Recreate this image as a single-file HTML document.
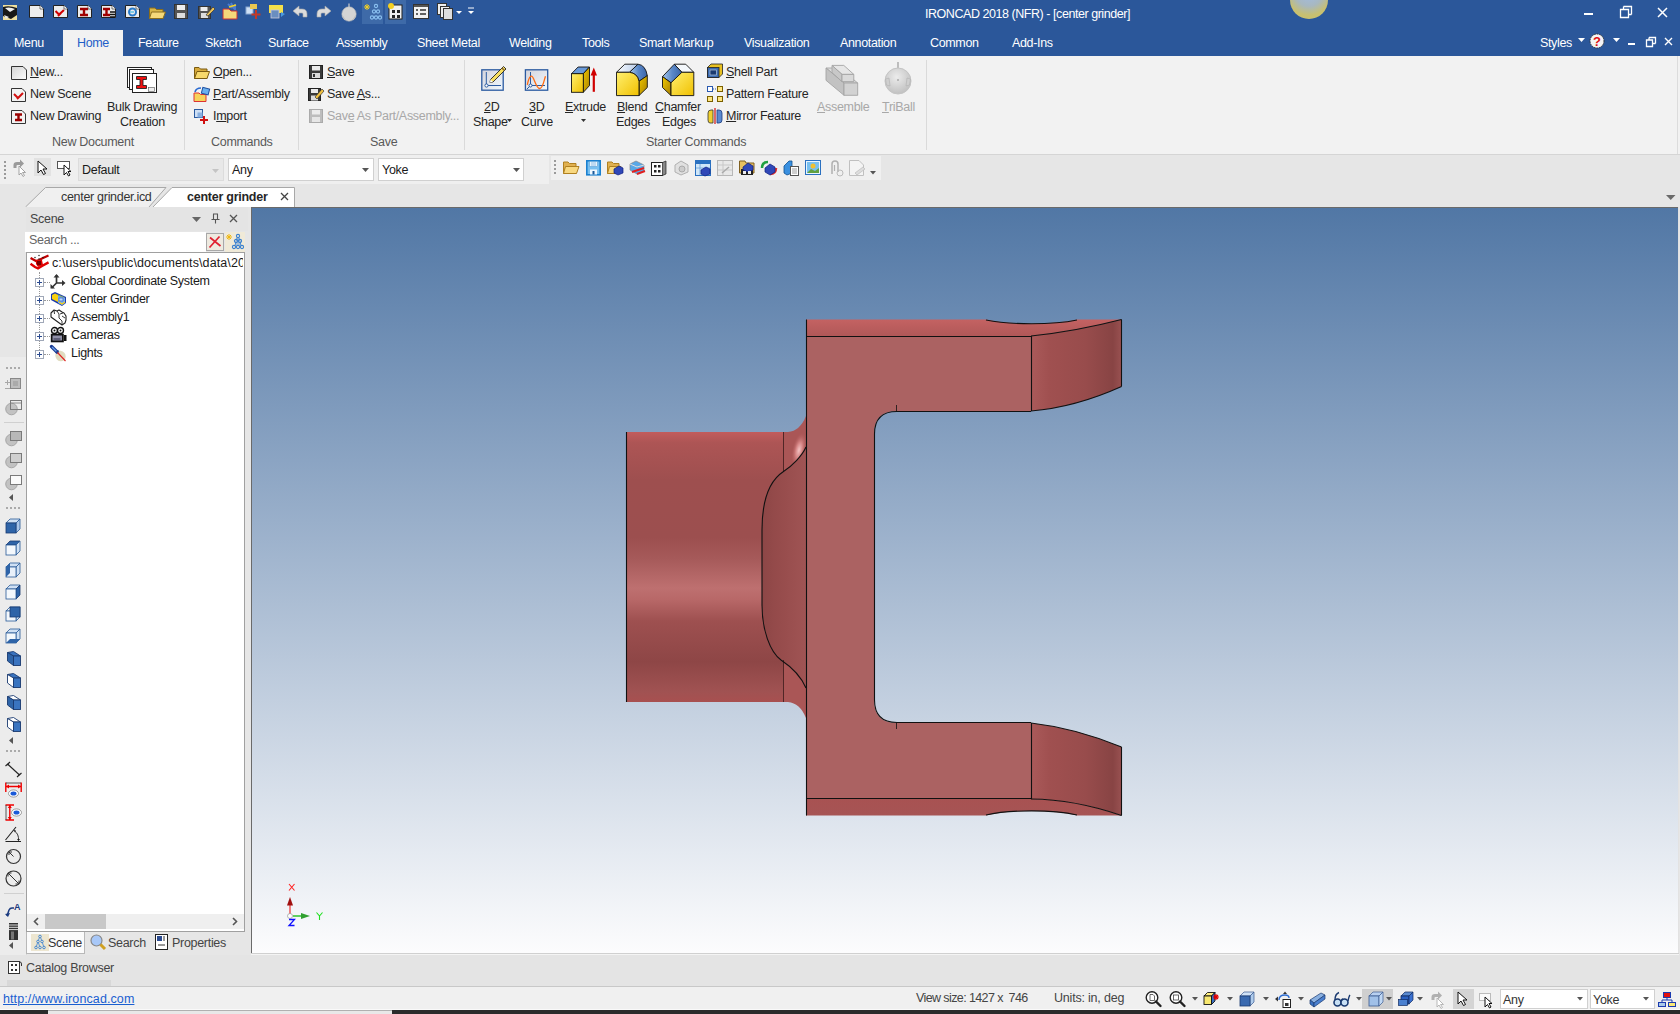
<!DOCTYPE html>
<html><head><meta charset="utf-8">
<style>
*{margin:0;padding:0;box-sizing:border-box}
html,body{width:1680px;height:1014px;overflow:hidden;background:#e6e6e6;font-family:"Liberation Sans",sans-serif;font-size:12px;color:#222}
.a{position:absolute;white-space:nowrap}
svg.a{overflow:visible}
</style></head><body>

<div class="a" style="left:0px;top:0px;width:1680px;height:56px;background:#2b579a;"></div>
<svg class="a" style="left:3px;top:5px;" width="14" height="15" viewBox="0 0 14 15"><rect x="0" y="0" width="14" height="15" fill="#efe0a0"/><path d="M0 2 Q6 0 14 3 V10 L8 14 L0 11Z" fill="#181818"/><path d="M2 3 Q7 1.5 12 4 L7 7Z" fill="#f0f0f0"/><path d="M1 10 L6 12 L3 14 Z" fill="#e8e8e8"/></svg>
<svg class="a" style="left:29px;top:5px;" width="15" height="13" viewBox="0 0 15 13"><path d="M0.5 0.5 H11 L14.5 4 V12.5 H0.5Z" fill="#ececec" stroke="#222" stroke-width="1"/><path d="M11 0.5 V4 H14.5" fill="#fff" stroke="#222" stroke-width=".6"/></svg>
<svg class="a" style="left:53px;top:5px;" width="15" height="13" viewBox="0 0 15 13"><path d="M0.5 0.5 H11 L14.5 4 V12.5 H0.5Z" fill="#ececec" stroke="#222" stroke-width="1"/><path d="M11 0.5 V4 H14.5" fill="#fff" stroke="#222" stroke-width=".6"/><path d="M2.5 6 L6 9.5 L11 5 M5 11 L8 8" stroke="#d00000" stroke-width="2" fill="none"/></svg>
<svg class="a" style="left:77px;top:5px;" width="15" height="13" viewBox="0 0 15 13"><path d="M0.5 0.5 H11 L14.5 4 V12.5 H0.5Z" fill="#ececec" stroke="#222" stroke-width="1"/><path d="M11 0.5 V4 H14.5" fill="#fff" stroke="#222" stroke-width=".6"/><path d="M3 4 H11 M7 4 V10 M3 10 H11" stroke="#a00000" stroke-width="2.4" fill="none"/></svg>
<svg class="a" style="left:101px;top:5px;" width="15" height="13" viewBox="0 0 15 13"><path d="M0.5 0.5 H11 L14.5 4 V12.5 H0.5Z" fill="#ececec" stroke="#222" stroke-width="1"/><path d="M11 0.5 V4 H14.5" fill="#fff" stroke="#222" stroke-width=".6"/><path d="M2 4 H9 M5.5 4 V10 M2 10 H9" stroke="#a00000" stroke-width="2.4" fill="none"/><path d="M9 7 H14 M9 9.5 H14 M9 12 H14" stroke="#111" stroke-width="1.4"/></svg>
<svg class="a" style="left:125px;top:5px;" width="15" height="13" viewBox="0 0 15 13"><path d="M0.5 0.5 H11 L14.5 4 V12.5 H0.5Z" fill="#ececec" stroke="#222" stroke-width="1"/><path d="M11 0.5 V4 H14.5" fill="#fff" stroke="#222" stroke-width=".6"/><circle cx="7.5" cy="7" r="3.5" fill="none" stroke="#2a7ac8" stroke-width="2"/><path d="M5 7 L9 7" stroke="#20b0e0"/></svg>
<svg class="a" style="left:149px;top:6px;" width="17" height="13" viewBox="0 0 17 13"><path d="M0.5 2 H6 L7.5 3.5 H14 V12.5 H0.5Z" fill="#d9b84a" stroke="#8a6d1c"/><path d="M2.5 6 H16.5 L14 12.5 H0.5Z" fill="#f5d97a" stroke="#8a6d1c"/></svg>
<svg class="a" style="left:174px;top:4px;" width="14" height="15" viewBox="0 0 14 15"><rect x="0.5" y="0.5" width="13" height="14" fill="#555" stroke="#333"/><rect x="3" y="1" width="8" height="5" fill="#eee"/><rect x="3" y="9" width="8" height="5" fill="#ddd"/></svg>
<svg class="a" style="left:198px;top:4px;" width="17" height="15" viewBox="0 0 17 15"><rect x="0.5" y="2.5" width="12" height="12" fill="#555" stroke="#333"/><rect x="3" y="9" width="7" height="5" fill="#ddd"/><rect x="2.5" y="3" width="7" height="4" fill="#eee"/><path d="M8 11 L15 3 L17 5 L10 12Z" fill="#e9c25a" stroke="#333" stroke-width=".7"/></svg>
<svg class="a" style="left:222px;top:3px;" width="17" height="17" viewBox="0 0 17 17"><path d="M1 6 H7 L9 8 H15 V16 H1Z" fill="#f5d97a" stroke="#c33"/><path d="M6 1 L10 5 M9 0 L12 6 M13 1 L13 7" stroke="#4a7ad0" stroke-width="2"/><path d="M7 4 L14 2" stroke="#f0d020" stroke-width="1.5"/></svg>
<svg class="a" style="left:246px;top:4px;" width="16" height="16" viewBox="0 0 16 16"><rect x="0" y="3" width="7" height="7" fill="#cfe0f5" stroke="#8aa8d0"/><rect x="4" y="0" width="7" height="5" fill="#e8c850"/><path d="M10 6 V15 M5.5 10.5 H14.5" stroke="#c0392b" stroke-width="2"/></svg>
<svg class="a" style="left:268px;top:4px;" width="18" height="16" viewBox="0 0 18 16"><rect x="1" y="1" width="14" height="8" fill="#f4e04a"/><rect x="3" y="6" width="8" height="8" fill="#6a8ec0" stroke="#ccd" stroke-width=".8"/><path d="M13 8 L17 10 L13 13" fill="#4a9ae0"/></svg>
<svg class="a" style="left:292px;top:5px;" width="16" height="13" viewBox="0 0 16 13"><path d="M1 6 L7 1 V4 H10 Q15 4 15 9 V12 H11 V9 Q11 8 10 8 H7 V11Z" fill="#dcdcdc" stroke="#aaa" stroke-width=".6"/></svg>
<svg class="a" style="left:316px;top:5px;" width="16" height="13" viewBox="0 0 16 13"><path d="M15 6 L9 1 V4 H6 Q1 4 1 9 V12 H5 V9 Q5 8 6 8 H9 V11Z" fill="#dcdcdc" stroke="#aaa" stroke-width=".6"/></svg>
<svg class="a" style="left:340px;top:3px;" width="18" height="18" viewBox="0 0 18 18"><path d="M9 0.5 V4" stroke="#ccc" stroke-width="1.2"/><circle cx="9" cy="11" r="7.2" fill="#d4d4d4" stroke="#b8b8b8" stroke-width=".6"/><path d="M2.5 13 L5 17 M15.5 13 L13 17" stroke="#bdbdbd" stroke-width="1.2"/></svg>
<div class="a" style="left:362px;top:0px;width:21px;height:24px;background:#3e6aa8;"></div>
<svg class="a" style="left:363px;top:3px;" width="19" height="18" viewBox="0 0 19 18"><path d="M4 1 V7 M1 4 H7 M2 2 L6 6 M6 2 L2 6" stroke="#f5d020" stroke-width="1"/><circle cx="13" cy="3" r="1.6" fill="none" stroke="#8ac0f0" stroke-width="1.1"/><circle cx="11" cy="8.5" r="1.6" fill="none" stroke="#8ac0f0" stroke-width="1.1"/><circle cx="15" cy="8.5" r="1.6" fill="none" stroke="#8ac0f0" stroke-width="1.1"/><circle cx="9" cy="14.5" r="1.6" fill="none" stroke="#8ac0f0" stroke-width="1.1"/><circle cx="13" cy="14.5" r="1.6" fill="none" stroke="#8ac0f0" stroke-width="1.1"/><circle cx="17" cy="14.5" r="1.6" fill="none" stroke="#8ac0f0" stroke-width="1.1"/></svg>
<div class="a" style="left:385px;top:0px;width:21px;height:24px;background:#3e6aa8;"></div>
<svg class="a" style="left:387px;top:3px;" width="17" height="17" viewBox="0 0 17 17"><rect x="2" y="2" width="13" height="14" fill="#f0f0f0" stroke="#222"/><rect x="5" y="7" width="3" height="3" fill="#222"/><rect x="10" y="7" width="3" height="3" fill="#222"/><rect x="5" y="12" width="3" height="3" fill="#222"/><rect x="10" y="12" width="3" height="3" fill="#222"/><circle cx="4" cy="3" r="3" fill="#f5d020"/></svg>
<svg class="a" style="left:413px;top:4px;" width="16" height="15" viewBox="0 0 16 15"><rect x="0.5" y="0.5" width="15" height="14" fill="#f2f2f2" stroke="#333"/><rect x="1" y="1" width="14" height="2" fill="#555"/><path d="M3 6 H5 M7 6 H13 M3 10 H5 M7 10 H13" stroke="#333" stroke-width="1.3"/></svg>
<svg class="a" style="left:437px;top:3px;" width="25" height="17" viewBox="0 0 25 17"><rect x="0.5" y="0.5" width="9" height="11" fill="#eee" stroke="#333"/><rect x="3.5" y="3.5" width="9" height="11" fill="#eee" stroke="#333"/><rect x="6.5" y="5.5" width="9" height="11" fill="#ddd" stroke="#333"/><path d="M19 8 H25 L22 11Z" fill="#fff"/></svg>
<svg class="a" style="left:467px;top:7px;" width="8" height="9" viewBox="0 0 8 9"><path d="M1 1 H7" stroke="#fff"/><path d="M1 4 H7 L4 7Z" fill="#fff"/></svg>
<div class="a" style="left:925px;top:8.38px;font-size:12.5px;line-height:12.5px;color:#fff;letter-spacing:-0.45px">IRONCAD 2018 (NFR) - [center grinder]</div>
<svg class="a" style="left:1289px;top:-14px;" width="40" height="34" viewBox="0 0 40 34"><defs><radialGradient id="mg" cx=".5" cy=".3" r=".6"><stop offset="0" stop-color="#a0bce6"/><stop offset=".6" stop-color="#a8b8c0"/><stop offset="1" stop-color="#c8c070"/></radialGradient></defs><circle cx="20" cy="14" r="19" fill="url(#mg)"/></svg>
<div class="a" style="left:1584px;top:13px;width:9px;height:2px;background:#fff;"></div>
<svg class="a" style="left:1620px;top:6px;" width="12" height="12" viewBox="0 0 12 12"><path d="M3.5 0.5 H11.5 V8.5 M0.5 3.5 H8.5 V11.5 H0.5Z M3.5 0.5 V3.5 M8.5 8.5 H11.5" stroke="#fff" stroke-width="1.3" fill="none"/></svg>
<svg class="a" style="left:1657px;top:7px;" width="11" height="11" viewBox="0 0 11 11"><path d="M1 1 L10 10 M10 1 L1 10" stroke="#fff" stroke-width="1.5"/></svg>
<div class="a" style="left:63px;top:30px;width:60px;height:26px;background:#f2f2f2;"></div>
<div class="a" style="left:14px;top:37.38px;font-size:12.5px;line-height:12.5px;color:#fff;letter-spacing:-0.35px;">Menu</div>
<div class="a" style="left:77px;top:37.38px;font-size:12.5px;line-height:12.5px;color:#1f5fc8;letter-spacing:-0.35px;">Home</div>
<div class="a" style="left:138px;top:37.38px;font-size:12.5px;line-height:12.5px;color:#fff;letter-spacing:-0.35px;">Feature</div>
<div class="a" style="left:205px;top:37.38px;font-size:12.5px;line-height:12.5px;color:#fff;letter-spacing:-0.35px;">Sketch</div>
<div class="a" style="left:268px;top:37.38px;font-size:12.5px;line-height:12.5px;color:#fff;letter-spacing:-0.35px;">Surface</div>
<div class="a" style="left:336px;top:37.38px;font-size:12.5px;line-height:12.5px;color:#fff;letter-spacing:-0.35px;">Assembly</div>
<div class="a" style="left:417px;top:37.38px;font-size:12.5px;line-height:12.5px;color:#fff;letter-spacing:-0.35px;">Sheet Metal</div>
<div class="a" style="left:509px;top:37.38px;font-size:12.5px;line-height:12.5px;color:#fff;letter-spacing:-0.35px;">Welding</div>
<div class="a" style="left:582px;top:37.38px;font-size:12.5px;line-height:12.5px;color:#fff;letter-spacing:-0.35px;">Tools</div>
<div class="a" style="left:639px;top:37.38px;font-size:12.5px;line-height:12.5px;color:#fff;letter-spacing:-0.35px;">Smart Markup</div>
<div class="a" style="left:744px;top:37.38px;font-size:12.5px;line-height:12.5px;color:#fff;letter-spacing:-0.35px;">Visualization</div>
<div class="a" style="left:840px;top:37.38px;font-size:12.5px;line-height:12.5px;color:#fff;letter-spacing:-0.35px;">Annotation</div>
<div class="a" style="left:930px;top:37.38px;font-size:12.5px;line-height:12.5px;color:#fff;letter-spacing:-0.35px;">Common</div>
<div class="a" style="left:1012px;top:37.38px;font-size:12.5px;line-height:12.5px;color:#fff;letter-spacing:-0.35px;">Add-Ins</div>
<div class="a" style="left:1540px;top:37.38px;font-size:12.5px;line-height:12.5px;color:#fff;letter-spacing:-0.35px;">Styles</div>
<svg class="a" style="left:1578px;top:38px;" width="7" height="5" viewBox="0 0 7 5"><path d="M0 0 H7 L3.5 4Z" fill="#fff"/></svg>
<svg class="a" style="left:1589px;top:33px;" width="16" height="16" viewBox="0 0 16 16"><circle cx="8" cy="8" r="7" fill="#f4f4f4" stroke="#333" stroke-dasharray="1.5 1"/><text x="8" y="13" font-family="Liberation Sans" font-weight="bold" font-size="13" fill="#e01010" text-anchor="middle">?</text></svg>
<svg class="a" style="left:1613px;top:38px;" width="7" height="5" viewBox="0 0 7 5"><path d="M0 0 H7 L3.5 4Z" fill="#fff"/></svg>
<div class="a" style="left:1628px;top:43px;width:7px;height:2px;background:#fff;"></div>
<svg class="a" style="left:1646px;top:37px;" width="10" height="10" viewBox="0 0 10 10"><path d="M3 .5 H9.5 V6.5 M.5 3 H6.5 V9.5 H.5Z M3 .5 V3 M6.5 6.5 H9.5" stroke="#fff" stroke-width="1.3" fill="none"/></svg>
<svg class="a" style="left:1664px;top:37px;" width="9" height="9" viewBox="0 0 9 9"><path d="M1 1 L8 8 M8 1 L1 8" stroke="#fff" stroke-width="1.4"/></svg>
<div class="a" style="left:0px;top:56px;width:1680px;height:98px;background:#f2f2f2;"></div>
<div class="a" style="left:1677px;top:56px;width:1px;height:98px;background:#dcdcdc;"></div>
<div class="a" style="left:0px;top:154px;width:1680px;height:1px;background:#d5d5d5;"></div>
<div class="a" style="left:184px;top:60px;width:1px;height:90px;background:#dadada;"></div>
<div class="a" style="left:298px;top:60px;width:1px;height:90px;background:#dadada;"></div>
<div class="a" style="left:464px;top:60px;width:1px;height:90px;background:#dadada;"></div>
<div class="a" style="left:926px;top:60px;width:1px;height:90px;background:#dadada;"></div>
<svg class="a" style="left:11px;top:66px;" width="16" height="14" viewBox="0 0 16 14"><defs><linearGradient id="dg" x1="0" y1="0" x2="1" y2="1"><stop offset="0" stop-color="#d4d4d4"/><stop offset="1" stop-color="#fcfcfc"/></linearGradient></defs><path d="M0.5 0.5 H12 L15.5 4 V13.5 H0.5Z" fill="url(#dg)" stroke="#333"/></svg>
<svg class="a" style="left:11px;top:88px;" width="16" height="14" viewBox="0 0 16 14"><path d="M0.5 0.5 H11 L14.5 4 V13.5 H0.5Z" fill="#f2f2f2" stroke="#333"/><path d="M3 6 L7 10 L12 5 M6 11 L9 8" stroke="#d01010" stroke-width="2" fill="none"/></svg>
<svg class="a" style="left:11px;top:110px;" width="16" height="14" viewBox="0 0 16 14"><path d="M0.5 0.5 H11 L14.5 4 V13.5 H0.5Z" fill="#f2f2f2" stroke="#333"/><path d="M4 4.5 H11 M7.5 4.5 V10 M4 10 H11" stroke="#9b0000" stroke-width="2.4" fill="none"/></svg>
<div class="a" style="left:30px;top:66.38px;font-size:12.5px;line-height:12.5px;color:#262626;letter-spacing:-0.3px"><u>N</u>ew...</div>
<div class="a" style="left:30px;top:88.38px;font-size:12.5px;line-height:12.5px;color:#262626;letter-spacing:-0.3px">New Scene</div>
<div class="a" style="left:30px;top:110.38px;font-size:12.5px;line-height:12.5px;color:#262626;letter-spacing:-0.3px">New Drawing</div>
<svg class="a" style="left:127px;top:67px;" width="31" height="26" viewBox="0 0 31 26"><rect x="0.5" y="0.5" width="24" height="20" fill="#fff" stroke="#222"/><rect x="2.5" y="2.5" width="24" height="20" fill="#fff" stroke="#222"/><rect x="5.5" y="6.5" width="24" height="19" fill="#fff" stroke="#222"/><path d="M9.5 9.5 H19.5 V12.5 H16 V18.5 H19.5 V21.5 H9.5 V18.5 H13 V12.5 H9.5Z" fill="#f01010" stroke="#222" stroke-width=".9"/><rect x="21.5" y="20.5" width="6" height="4" fill="#eee" stroke="#555" stroke-width=".6"/></svg>
<div class="a" style="left:107px;top:101.38px;font-size:12.5px;line-height:12.5px;color:#262626;letter-spacing:-0.3px">Bulk Drawing</div>
<div class="a" style="left:120px;top:116.38px;font-size:12.5px;line-height:12.5px;color:#262626;letter-spacing:-0.3px">Creation</div>
<div class="a" style="left:52px;top:136.38px;font-size:12.5px;line-height:12.5px;color:#595959;letter-spacing:-0.3px">New Document</div>
<svg class="a" style="left:194px;top:66px;" width="16" height="13" viewBox="0 0 16 13"><path d="M0.5 1.5 H5 L6.5 3 H13 V12.5 H0.5Z" fill="#d6a93a" stroke="#7a5a10"/><path d="M3 5.5 H15.5 L13 12.5 H0.5Z" fill="#f7d86a" stroke="#7a5a10"/></svg>
<svg class="a" style="left:193px;top:87px;" width="17" height="15" viewBox="0 0 17 15"><path d="M1 6 H6 L7.5 7.5 H13 V14.5 H1Z" fill="#f6d35a" stroke="#d33" stroke-width="1"/><path d="M2 5 Q3 1 8 1" stroke="#2a6ad0" stroke-width="1.6" fill="none"/><rect x="9" y="1" width="7" height="6" fill="#6ab0f0" stroke="#2050a0" transform="rotate(15 12 4)"/></svg>
<svg class="a" style="left:194px;top:109px;" width="16" height="15" viewBox="0 0 16 15"><rect x="0.5" y="0.5" width="8" height="8" fill="#cfe0f5" stroke="#2a5aa0"/><rect x="3.5" y="3.5" width="5" height="5" fill="#8ab0e0"/><path d="M10 7 V15 M6 11 H14" stroke="#d01010" stroke-width="2"/></svg>
<div class="a" style="left:213px;top:66.38px;font-size:12.5px;line-height:12.5px;color:#262626;letter-spacing:-0.3px"><u>O</u>pen...</div>
<div class="a" style="left:213px;top:88.38px;font-size:12.5px;line-height:12.5px;color:#262626;letter-spacing:-0.3px"><u>P</u>art/Assembly</div>
<div class="a" style="left:213px;top:110.38px;font-size:12.5px;line-height:12.5px;color:#262626;letter-spacing:-0.3px">I<u>m</u>port</div>
<div class="a" style="left:211px;top:136.38px;font-size:12.5px;line-height:12.5px;color:#595959;letter-spacing:-0.3px">Commands</div>
<svg class="a" style="left:309px;top:65px;" width="14" height="14" viewBox="0 0 14 14"><rect x="0.5" y="0.5" width="13" height="13" fill="#3a3a3a" stroke="#222"/><rect x="3" y="1" width="8" height="4.5" fill="#eaeaea"/><rect x="3" y="8" width="8" height="5" fill="#dcdcdc"/><rect x="4" y="9" width="2" height="3" fill="#333"/></svg>
<svg class="a" style="left:308px;top:87px;" width="16" height="15" viewBox="0 0 16 15"><rect x="0.5" y="1.5" width="12" height="12" fill="#3a3a3a" stroke="#222"/><rect x="3" y="2" width="7" height="4" fill="#eaeaea"/><rect x="3" y="8.5" width="7" height="5" fill="#dcdcdc"/><path d="M7 10 L14 2 L16 4 L9 12Z" fill="#f0c040" stroke="#333" stroke-width=".7"/></svg>
<svg class="a" style="left:309px;top:109px;" width="14" height="14" viewBox="0 0 14 14"><rect x="0.5" y="0.5" width="13" height="13" fill="#bdbdbd" stroke="#aaa"/><rect x="3" y="1" width="8" height="4.5" fill="#ececec"/><rect x="3" y="8" width="8" height="5" fill="#e6e6e6"/></svg>
<div class="a" style="left:327px;top:66.38px;font-size:12.5px;line-height:12.5px;color:#262626;letter-spacing:-0.3px"><u>S</u>ave</div>
<div class="a" style="left:327px;top:88.38px;font-size:12.5px;line-height:12.5px;color:#262626;letter-spacing:-0.3px">Save <u>A</u>s...</div>
<div class="a" style="left:327px;top:110.38px;font-size:12.5px;line-height:12.5px;color:#a8a8a8;letter-spacing:-0.3px">Sav<u>e</u> As Part/Assembly...</div>
<div class="a" style="left:370px;top:136.38px;font-size:12.5px;line-height:12.5px;color:#595959;letter-spacing:-0.3px">Save</div>
<svg class="a" style="left:480px;top:64px;" width="27" height="28" viewBox="0 0 27 28"><defs><linearGradient id="bx" x1="0" y1="0" x2="1" y2="1"><stop offset="0" stop-color="#d4d4dc"/><stop offset="1" stop-color="#f0f8fe"/></linearGradient></defs><rect x="1.8" y="5.8" width="21.4" height="20.4" fill="url(#bx)" stroke="#2a5aa0" stroke-width="1.3"/><path d="M6.3 8 V21.5 H21" stroke="#2a5aa0" stroke-width="1" fill="none"/><circle cx="6.5" cy="21.5" r="1.6" fill="#fff" stroke="#2a5aa0" stroke-width="1"/><path d="M10.5 15.5 L23.5 2.5 L26 5 L13 18 L10 18.5Z" fill="#f8e060" stroke="#222" stroke-width=".9"/><path d="M10.5 15.5 L13 18 L10 18.5Z" fill="#fff"/><path d="M22 4 L24.5 6.5" stroke="#8a6a30" stroke-width="1.5"/></svg>
<div class="a" style="left:484px;top:101.38px;font-size:12.5px;line-height:12.5px;color:#262626;letter-spacing:-0.3px"><u>2</u>D</div>
<div class="a" style="left:473px;top:116.38px;font-size:12.5px;line-height:12.5px;color:#262626;letter-spacing:-0.3px">Shape</div>
<svg class="a" style="left:507px;top:119px;" width="5" height="3" viewBox="0 0 5 3"><path d="M0 0 H5 L2.5 3Z" fill="#333"/></svg>
<svg class="a" style="left:524px;top:68px;" width="25" height="24" viewBox="0 0 25 24"><rect x="1.4" y="1.8" width="22.3" height="20.4" fill="url(#bx)" stroke="#2a5aa0" stroke-width="1.3"/><path d="M6.5 4 V17.5 H21 M6.5 17.5 L3 21" stroke="#2a5aa0" stroke-width="1" fill="none"/><circle cx="6.5" cy="17.5" r="1.5" fill="#fff" stroke="#2a5aa0" stroke-width="1"/><path d="M3.3 16.8 C4.5 11 6 8 7.6 8.2 C10 8.5 12 20.5 15.6 20.5 C19 20.5 20 12 21.5 8.2" stroke="#ff6a10" stroke-width="1.3" fill="none"/></svg>
<div class="a" style="left:529px;top:101.38px;font-size:12.5px;line-height:12.5px;color:#262626;letter-spacing:-0.3px"><u>3</u>D</div>
<div class="a" style="left:521px;top:116.38px;font-size:12.5px;line-height:12.5px;color:#262626;letter-spacing:-0.3px">Curve</div>
<svg class="a" style="left:571px;top:66px;" width="28" height="28" viewBox="0 0 28 28"><defs><linearGradient id="yg" x1="0" y1="0" x2="1" y2="1"><stop offset="0" stop-color="#fff070"/><stop offset="1" stop-color="#f0c000"/></linearGradient><linearGradient id="yd" x1="0" y1="0" x2="1" y2="1"><stop offset="0" stop-color="#f0c800"/><stop offset="1" stop-color="#a88000"/></linearGradient><linearGradient id="bgr" x1="0" y1="0" x2="1" y2="0"><stop offset="0" stop-color="#a8c8ec"/><stop offset=".5" stop-color="#5a88c8"/><stop offset="1" stop-color="#3a64a8"/></linearGradient><linearGradient id="wg" x1="0" y1="0" x2="1" y2="0"><stop offset="0" stop-color="#fafcff"/><stop offset="1" stop-color="#b8cce8"/></linearGradient></defs><path d="M0.5 7.7 L7.1 1 H18.5 L12.3 7.7Z" fill="#6a9ad8" stroke="#111" stroke-width=".9"/><path d="M12.3 7.7 L18.5 1 V19.6 L12.3 26.3Z" fill="url(#yd)" stroke="#111" stroke-width=".9"/><rect x="0.5" y="7.7" width="11.8" height="18.6" fill="url(#yg)" stroke="#111" stroke-width=".9"/><path d="M22.8 25.8 V8" stroke="#d00000" stroke-width="2.2"/><path d="M19.6 9.5 L22.8 1.5 L26 9.5Z" fill="#d00000"/></svg>
<div class="a" style="left:565px;top:101.38px;font-size:12.5px;line-height:12.5px;color:#262626;letter-spacing:-0.3px"><u>E</u>xtrude</div>
<svg class="a" style="left:581px;top:119px;" width="5" height="4" viewBox="0 0 5 4"><path d="M0 0 H5 L2.5 3Z" fill="#333"/></svg>
<svg class="a" style="left:616px;top:63px;" width="33" height="34" viewBox="0 0 33 34"><path d="M0.5 9.3 L8.8 1.2 H22 L13.5 9.3Z" fill="url(#wg)" stroke="#111" stroke-width=".9"/><path d="M13.5 9.3 L22 1.2 Q29.5 2 31.3 12.6 L23 18.3 Q21.5 10.3 13.5 9.3Z" fill="url(#bgr)" stroke="#111" stroke-width=".9"/><path d="M23 18.3 L31.3 12.6 V24.5 L23 32.6Z" fill="url(#yd)" stroke="#111" stroke-width=".9"/><path d="M0.5 9.3 H13.5 Q21.5 10.3 23 18.3 V32.6 H0.5Z" fill="url(#yg)" stroke="#111" stroke-width=".9"/></svg>
<div class="a" style="left:617px;top:101.38px;font-size:12.5px;line-height:12.5px;color:#262626;letter-spacing:-0.3px"><u>B</u>lend</div>
<div class="a" style="left:616px;top:116.38px;font-size:12.5px;line-height:12.5px;color:#262626;letter-spacing:-0.3px">Edges</div>
<svg class="a" style="left:662px;top:63px;" width="33" height="34" viewBox="0 0 33 34"><path d="M12.3 1.2 H23.7 L31.8 9.3 H19.9Z" fill="#f4f8fc" stroke="#111" stroke-width=".9"/><path d="M0.5 13.6 L12.3 1.2 L19.9 9.3 L9 19.8Z" fill="url(#bgr)" stroke="#111" stroke-width=".9"/><path d="M0.5 13.6 L9 19.8 V32.6 L0.5 24.5Z" fill="url(#yd)" stroke="#111" stroke-width=".9"/><path d="M9 19.8 L19.9 9.3 H31.8 V32.6 H9Z" fill="url(#yg)" stroke="#111" stroke-width=".9"/></svg>
<div class="a" style="left:655px;top:101.38px;font-size:12.5px;line-height:12.5px;color:#262626;letter-spacing:-0.3px"><u>C</u>hamfer</div>
<div class="a" style="left:662px;top:116.38px;font-size:12.5px;line-height:12.5px;color:#262626;letter-spacing:-0.3px">Edges</div>
<svg class="a" style="left:707px;top:63px;" width="16" height="15" viewBox="0 0 16 15"><path d="M0.5 4.5 L4 1 H15.5 V11 L12 14.5 H0.5Z" fill="#e8c020" stroke="#222" stroke-width=".8"/><rect x="0.5" y="4.5" width="11.5" height="10" fill="#3a6ab0" stroke="#222" stroke-width=".8"/><rect x="3" y="7" width="6.5" height="5" fill="#1a3a70" stroke="#cde" stroke-width=".6"/></svg>
<svg class="a" style="left:707px;top:86px;" width="16" height="16" viewBox="0 0 16 16"><rect x="0.5" y="0.5" width="5" height="5" fill="#fff" stroke="#2a5ab0"/><rect x="10.5" y="0.5" width="5" height="5" fill="#ffe680" stroke="#7a6000"/><rect x="0.5" y="10.5" width="5" height="5" fill="#ffe680" stroke="#7a6000"/><rect x="10.5" y="10.5" width="5" height="5" fill="#ffe680" stroke="#7a6000"/><path d="M6 3 H10" stroke="#2a5ab0" stroke-dasharray="1 1"/></svg>
<svg class="a" style="left:707px;top:108px;" width="16" height="16" viewBox="0 0 16 16"><path d="M1 5 Q1 2 4 2 H6 V15 H3 Q1 15 1 12Z" fill="#f0d030" stroke="#333" stroke-width=".8"/><path d="M10 2 H12 Q15 2 15 5 V12 Q15 15 12 15 H10Z" fill="#5a8ad0" stroke="#1a3a80" stroke-width=".8"/><path d="M8 0 V16" stroke="#d01010" stroke-width="1.2"/></svg>
<div class="a" style="left:726px;top:66.38px;font-size:12.5px;line-height:12.5px;color:#262626;letter-spacing:-0.3px"><u>S</u>hell Part</div>
<div class="a" style="left:726px;top:88.38px;font-size:12.5px;line-height:12.5px;color:#262626;letter-spacing:-0.3px">Pattern Feature</div>
<div class="a" style="left:726px;top:110.38px;font-size:12.5px;line-height:12.5px;color:#262626;letter-spacing:-0.3px"><u>M</u>irror Feature</div>
<svg class="a" style="left:825px;top:63px;" width="34" height="34" viewBox="0 0 34 34"><g stroke="#a4a4a4" stroke-width=".9" stroke-linejoin="round"><path d="M19 20 H32.7 L14.7 5 H1Z" fill="#dcdcdc"/><path d="M1 5 L19 20 V32.3 L1 17.3Z" fill="#c2c2c2"/><rect x="19" y="20" width="13.7" height="12.3" fill="#d2d2d2"/><path d="M17 11.4 H28.8 L18.8 2.4 H7Z" fill="#e6e6e6"/><path d="M7 2.4 L17 11.4 V18.6 L7 9.6Z" fill="#c8c8c8"/><rect x="17" y="11.4" width="11.8" height="7.2" fill="#dadada"/></g></svg>
<svg class="a" style="left:884px;top:62px;" width="28" height="33" viewBox="0 0 28 33"><defs><radialGradient id="tb" cx=".45" cy=".35" r=".7"><stop offset="0" stop-color="#ececec"/><stop offset="1" stop-color="#bdbdbd"/></radialGradient></defs><path d="M14 0 V6" stroke="#9a9a9a" stroke-width="1.2"/><circle cx="14" cy="19" r="13" fill="url(#tb)" stroke="#c4c4c4"/><path d="M1.5 17 L5 16 L6 24 L2.5 23Z M26.5 17 L23 16 L22 24 L25.5 23Z" fill="#cfcfcf" stroke="#b0b0b0" stroke-width=".6"/><circle cx="14" cy="18" r="1" fill="#aaa"/></svg>
<div class="a" style="left:817px;top:101.38px;font-size:12.5px;line-height:12.5px;color:#a8a8a8;letter-spacing:-0.3px"><u>A</u>ssemble</div>
<div class="a" style="left:882px;top:101.38px;font-size:12.5px;line-height:12.5px;color:#a8a8a8;letter-spacing:-0.3px"><u>T</u>riBall</div>
<div class="a" style="left:646px;top:136.38px;font-size:12.5px;line-height:12.5px;color:#595959;letter-spacing:-0.3px">Starter Commands</div>
<div class="a" style="left:0px;top:155px;width:1680px;height:52px;background:#e6e6e6;"></div>
<div class="a" style="left:0px;top:155px;width:549px;height:29px;background:#efefef;"></div>
<div class="a" style="left:4px;top:161px;width:2px;height:2px;background:#9a9a9a;"></div>
<div class="a" style="left:4px;top:165px;width:2px;height:2px;background:#9a9a9a;"></div>
<div class="a" style="left:4px;top:169px;width:2px;height:2px;background:#9a9a9a;"></div>
<div class="a" style="left:4px;top:173px;width:2px;height:2px;background:#9a9a9a;"></div>
<div class="a" style="left:4px;top:177px;width:2px;height:2px;background:#9a9a9a;"></div>
<svg class="a" style="left:13px;top:159px;" width="17" height="18" viewBox="0 0 17 18"><path d="M0.5 9 V6 Q0.5 3 4 3 H7 V0.5 L11 4.5 L7 8.5 V6 H4.5 Q3.5 6 3.5 7 V9Z" fill="#9a9a9a"/><path d="M6 7 V16 L8 14 L10 17.5 L11.5 16.5 L9.5 13.5 H12.5Z" fill="#fff" stroke="#9a9a9a" stroke-width=".9"/></svg>
<div class="a" style="left:34px;top:158px;width:17px;height:18px;background:#e2e2e2;"></div>
<svg class="a" style="left:37px;top:160px;" width="11" height="15" viewBox="0 0 11 15"><path d="M1 1 V13 L4 10 L6.5 14.5 L8.5 13.5 L6 9 H10Z" fill="#fff" stroke="#111" stroke-width="1"/></svg>
<svg class="a" style="left:57px;top:161px;" width="17" height="15" viewBox="0 0 17 15"><rect x="0.5" y="0.5" width="12" height="7" fill="#fff" stroke="#555"/><path d="M7 4 V14 L9.5 11.5 L11.5 15 L13 14 L11 10.5 H14Z" fill="#fff" stroke="#111" stroke-width="1"/></svg>
<div class="a" style="left:78px;top:158px;width:146px;height:23px;background:#e8e8e8;border:1px solid #dcdcdc"></div>
<div class="a" style="left:82px;top:164.38px;font-size:12.5px;line-height:12.5px;color:#1a1a1a;letter-spacing:-0.3px">Default</div>
<svg class="a" style="left:212px;top:169px;" width="7" height="4" viewBox="0 0 7 4"><path d="M0 0 H7 L3.5 4Z" fill="#c4c4c4"/></svg>
<div class="a" style="left:228px;top:158px;width:146px;height:23px;background:#fff;border:1px solid #d0d0d0"></div>
<div class="a" style="left:232px;top:164.38px;font-size:12.5px;line-height:12.5px;color:#1a1a1a;letter-spacing:-0.3px">Any</div>
<svg class="a" style="left:362px;top:168px;" width="7" height="4" viewBox="0 0 7 4"><path d="M0 0 H7 L3.5 4Z" fill="#555"/></svg>
<div class="a" style="left:378px;top:158px;width:146px;height:23px;background:#fff;border:1px solid #d0d0d0"></div>
<div class="a" style="left:382px;top:164.38px;font-size:12.5px;line-height:12.5px;color:#1a1a1a;letter-spacing:-0.3px">Yoke</div>
<svg class="a" style="left:513px;top:168px;" width="7" height="4" viewBox="0 0 7 4"><path d="M0 0 H7 L3.5 4Z" fill="#555"/></svg>
<div class="a" style="left:551px;top:156px;width:330px;height:24px;background:#f0f0f0;"></div>
<div class="a" style="left:554px;top:160px;width:2px;height:2px;background:#9a9a9a;"></div>
<div class="a" style="left:554px;top:164px;width:2px;height:2px;background:#9a9a9a;"></div>
<div class="a" style="left:554px;top:168px;width:2px;height:2px;background:#9a9a9a;"></div>
<div class="a" style="left:554px;top:172px;width:2px;height:2px;background:#9a9a9a;"></div>
<svg class="a" style="left:563px;top:160px;" width="17" height="17" viewBox="0 0 17 17"><path d="M0.5 2 H5 L6.5 3.5 H13 V13.5 H0.5Z" fill="#e0b050" stroke="#b08020"/><path d="M2.5 6.5 H16 L13.5 13.5 H0.5Z" fill="#f8d880" stroke="#b08020"/></svg>
<svg class="a" style="left:586px;top:160px;" width="17" height="17" viewBox="0 0 17 17"><rect x="0.8" y="0.8" width="13.4" height="14" fill="#78c0f0" stroke="#1a80d0" stroke-width="1.6"/><rect x="3.5" y="1.5" width="8" height="5" fill="#e8f4fc" stroke="#5aa0d8" stroke-width=".6"/><path d="M5 3 H10 M5 5 H10" stroke="#5aa0d8" stroke-width=".6"/><rect x="4" y="9.5" width="7" height="5" fill="#f0f8ff"/><rect x="6.5" y="11" width="2" height="3.5" fill="#1a5a9a"/></svg>
<svg class="a" style="left:607px;top:160px;" width="17" height="17" viewBox="0 0 17 17"><path d="M0.5 2 H5 L6.5 3.5 H12 V13.5 H0.5Z" fill="#e0b050" stroke="#b08020"/><path d="M2.5 6.5 H14 L12 13.5 H0.5Z" fill="#f8d880" stroke="#b08020"/><path d="M7 9 L12 6 L16 8 V13 L11 15 L7 13Z" fill="#3048b8" stroke="#102080" stroke-width=".7"/></svg>
<svg class="a" style="left:629px;top:160px;" width="17" height="17" viewBox="0 0 17 17"><path d="M1 4 L7 1 L15 5 V11 L8 14 L1 10Z" fill="#58a8e8" stroke="#888" stroke-width=".7"/><path d="M1 4 L8 7 L15 5" stroke="#ddd" fill="none"/><path d="M3 12 L15 8 M8 14 L16 11" stroke="#e02020" stroke-width="2"/></svg>
<svg class="a" style="left:651px;top:160px;" width="17" height="17" viewBox="0 0 17 17"><rect x="0.5" y="2.5" width="11" height="13" fill="#fff" stroke="#222"/><path d="M11.5 2.5 L15 1 V14 L11.5 15.5" fill="#888" stroke="#222" stroke-width=".7"/><rect x="3" y="5" width="2.5" height="2.5" fill="#222"/><rect x="7" y="5" width="2.5" height="2.5" fill="#222"/><rect x="3" y="10" width="2.5" height="2.5" fill="#222"/><rect x="7" y="10" width="2.5" height="2.5" fill="#222"/></svg>
<svg class="a" style="left:673px;top:160px;" width="17" height="17" viewBox="0 0 17 17"><path d="M2 5 L8 1 L15 5 V12 L8 15 L2 12Z" fill="#e0e0e0" stroke="#b0b0b0"/><circle cx="9" cy="9" r="3" fill="#ccc" stroke="#aaa"/></svg>
<svg class="a" style="left:695px;top:160px;" width="17" height="17" viewBox="0 0 17 17"><rect x="0.5" y="0.5" width="15" height="15" fill="#cfe6f8" stroke="#2a70c0"/><rect x="1" y="1" width="14" height="3" fill="#2a70c0"/><path d="M1 8 H15 M5 4 V15" stroke="#6aa0d8" stroke-width=".8"/><path d="M6 10 L11 7 L15 9 V14 L10 16 L6 14Z" fill="#3048b8" stroke="#102080" stroke-width=".7"/></svg>
<svg class="a" style="left:717px;top:160px;" width="17" height="17" viewBox="0 0 17 17"><rect x="0.5" y="0.5" width="15" height="15" fill="#e8e8e8" stroke="#b8b8b8"/><path d="M1 5 H15 M1 10 H15 M6 1 V15" stroke="#c8c8c8"/><path d="M5 13 L12 7" stroke="#aaa" stroke-width="1.5"/></svg>
<svg class="a" style="left:739px;top:160px;" width="17" height="17" viewBox="0 0 17 17"><path d="M0.5 1 H6 L7 3 H15 V13 H0.5Z" fill="#e8c060" stroke="#806020"/><rect x="2" y="9" width="12" height="6" fill="#222"/><path d="M4 7 L9 3 L14 6 V10 L9 12 L4 10Z" fill="#3048b8" stroke="#102080" stroke-width=".7"/><rect x="4" y="11" width="3" height="3" fill="#eee"/><rect x="9" y="11" width="3" height="3" fill="#eee"/></svg>
<svg class="a" style="left:761px;top:160px;" width="17" height="17" viewBox="0 0 17 17"><path d="M1 8 Q1 2 7 2" stroke="#20a040" stroke-width="2.5" fill="none"/><path d="M15 8 Q15 14 9 14" stroke="#e03030" stroke-width="2.5" fill="none"/><path d="M4 8 L9 4 L14 7 V12 L9 15 L4 12Z" fill="#3048b8" stroke="#102080" stroke-width=".7"/></svg>
<svg class="a" style="left:783px;top:160px;" width="17" height="17" viewBox="0 0 17 17"><path d="M1 6 L6 1 H9 V13 L4 15 L1 13Z" fill="#3a90e0" stroke="#105090" stroke-width=".8"/><rect x="7.5" y="6.5" width="8" height="9" fill="#fff" stroke="#555"/><path d="M9 9 H14 M9 11 H14 M9 13 H14" stroke="#777" stroke-width=".7"/></svg>
<svg class="a" style="left:805px;top:160px;" width="17" height="17" viewBox="0 0 17 17"><rect x="0.5" y="0.5" width="15" height="14" fill="#e8f4ff" stroke="#2a70c0"/><rect x="2" y="2" width="12" height="11" fill="#78c0f0"/><path d="M2 13 L6 9 L10 11 L14 8 V13Z" fill="#60a040"/><circle cx="8" cy="6" r="2.5" fill="#f0c030"/></svg>
<svg class="a" style="left:827px;top:160px;" width="17" height="17" viewBox="0 0 17 17"><path d="M5 14 V4 Q5 1 8 1 Q11 1 11 4 V12" stroke="#b0b0b0" stroke-width="1.5" fill="none"/><path d="M7.5 11 V5" stroke="#b0b0b0" stroke-width="1.2"/><circle cx="13" cy="13" r="3" fill="none" stroke="#bbb"/></svg>
<svg class="a" style="left:849px;top:160px;" width="17" height="17" viewBox="0 0 17 17"><path d="M0.5 0.5 H10 L14.5 5 V15.5 H0.5Z" fill="#f4f4f4" stroke="#c0c0c0"/><path d="M6 13 L14 7 L16 9 L8 15Z" fill="#ddd" stroke="#bbb" stroke-width=".7"/></svg>
<svg class="a" style="left:870px;top:171px;" width="6" height="4" viewBox="0 0 6 4"><path d="M0 0 H6 L3 3.5Z" fill="#555"/></svg>
<div class="a" style="left:0px;top:184px;width:1680px;height:24px;background:#e6e6e6;"></div>
<svg class="a" style="left:20px;top:186px;" width="160" height="22" viewBox="0 0 160 22"><path d="M5.5 21 L25.5 1.5 H146 L129 21" fill="#f0f0f0" stroke="#a8a8a8" stroke-width="1"/></svg>
<svg class="a" style="left:148px;top:186px;" width="150" height="22" viewBox="0 0 150 22"><path d="M4 22 L24 1.5 H146.5 V22Z" fill="#fff" stroke="#a8a8a8" stroke-width="1"/></svg>
<div class="a" style="left:61px;top:191.38px;font-size:12.5px;line-height:12.5px;color:#333;letter-spacing:-0.3px">center grinder.icd</div>
<div class="a" style="left:187px;top:191.38px;font-size:12.5px;line-height:12.5px;color:#262626;letter-spacing:-0.25px;font-weight:bold">center grinder</div>
<svg class="a" style="left:280px;top:192px;" width="9" height="9" viewBox="0 0 9 9"><path d="M1 1 L8 8 M8 1 L1 8" stroke="#444" stroke-width="1.3"/></svg>
<svg class="a" style="left:1666px;top:195px;" width="10" height="6" viewBox="0 0 10 6"><path d="M0 0 H9.5 L4.75 5Z" fill="#6a6a6a"/></svg>
<div class="a" style="left:0px;top:207px;width:252px;height:748px;background:#e6e6e6;"></div>
<div class="a" style="left:0px;top:357px;width:26px;height:598px;background:#ececec;"></div>
<div class="a" style="left:26px;top:357px;width:1px;height:598px;background:#d8d8d8;"></div>
<div class="a" style="left:26px;top:207px;width:222px;height:24px;background:#e4e4e4;"></div>
<div class="a" style="left:30px;top:213.38px;font-size:12.5px;line-height:12.5px;color:#444;letter-spacing:-0.3px">Scene</div>
<svg class="a" style="left:192px;top:217px;" width="9" height="6" viewBox="0 0 9 6"><path d="M0 0 H9 L4.5 5Z" fill="#666"/></svg>
<svg class="a" style="left:211px;top:213px;" width="9" height="11" viewBox="0 0 9 11"><path d="M2 1 H7 M2.5 1 V6 M6.5 1 V6 M0.5 6.5 H8.5 M4.5 6.5 V10.5" stroke="#555" stroke-width="1.1" fill="none"/></svg>
<svg class="a" style="left:229px;top:214px;" width="9" height="9" viewBox="0 0 9 9"><path d="M1 1 L8 8 M8 1 L1 8" stroke="#555" stroke-width="1.3"/></svg>
<div class="a" style="left:25px;top:232px;width:181px;height:20px;background:#fff;"></div>
<div class="a" style="left:29px;top:234.38px;font-size:12.5px;line-height:12.5px;color:#666;letter-spacing:-0.3px">Search ...</div>
<div class="a" style="left:206px;top:233px;width:18px;height:18px;background:#eeeae0;border:1px solid #a8a8a8"></div>
<svg class="a" style="left:208px;top:235px;" width="14" height="14" viewBox="0 0 14 14"><path d="M1.5 12.5 L11.5 1.5 M2 2.5 L12.5 11" stroke="#e02030" stroke-width="1.7"/></svg>
<div class="a" style="left:225px;top:232px;width:20px;height:20px;background:#f0ead8;"></div>
<svg class="a" style="left:225px;top:233px;" width="19" height="18" viewBox="0 0 19 18"><path d="M4 1 V7 M1 4 H7 M2 2 L6 6 M6 2 L2 6" stroke="#f0b810" stroke-width="1"/><circle cx="13" cy="3" r="1.6" fill="none" stroke="#3a80d0" stroke-width="1.1"/><circle cx="11" cy="8" r="1.6" fill="none" stroke="#3a80d0" stroke-width="1.1"/><circle cx="15" cy="8" r="1.6" fill="none" stroke="#3a80d0" stroke-width="1.1"/><circle cx="9" cy="14" r="1.6" fill="none" stroke="#3a80d0" stroke-width="1.1"/><circle cx="13" cy="14" r="1.6" fill="none" stroke="#3a80d0" stroke-width="1.1"/><circle cx="17" cy="14" r="1.6" fill="none" stroke="#3a80d0" stroke-width="1.1"/><path d="M12 4.5 L10 12.5 M14 4.5 L16 12.5 M11 9.5 V12.5 M15 9.5 V12.5 M13 4.5 V12.5" stroke="#3a80d0" stroke-width=".8"/></svg>
<div class="a" style="left:26px;top:252px;width:219px;height:680px;background:#fff;border:1px solid #a0a0a0"></div>
<svg class="a" style="left:30px;top:255px;" width="18" height="17" viewBox="0 0 18 17"><path d="M1.5 3.5 L6 6 L9 5 L13 3 L17.5 1" stroke="#c00000" stroke-width="2.2" fill="none" stroke-linecap="square"/><path d="M1.5 9.5 L5 12 L8 13.5 L12 11 L17.5 8" stroke="#e00000" stroke-width="2.4" fill="none" stroke-linecap="square"/><path d="M6 5 L12 5 L13 10 L8 12 L6 9Z" fill="#e00000"/><rect x="7" y="6" width="4" height="4" fill="#7a0000"/><circle cx="9" cy="0.5" r=".7" fill="#111"/><circle cx="5" cy="2.5" r=".7" fill="#111"/><circle cx="13" cy="2.5" r=".7" fill="#111"/><circle cx="9" cy="4" r=".7" fill="#111"/></svg>
<div class="a" style="left:52px;top:257.38px;font-size:12.5px;line-height:12.5px;color:#1a1a1a;letter-spacing:0.1px;width:191px;overflow:hidden">c:\users\public\documents\data\2017</div>
<div class="a" style="left:39px;top:272px;width:1px;height:82px;border-left:1px dotted #999"></div>
<div class="a" style="left:35px;top:278px;width:9px;height:9px;background:#fff;border:1px solid #a0a8b8"></div>
<div class="a" style="left:37px;top:282px;width:5px;height:1px;background:#2a4a90;"></div>
<div class="a" style="left:39px;top:280px;width:1px;height:5px;background:#2a4a90;"></div>
<div class="a" style="left:44px;top:282px;width:6px;height:1px;border-top:1px dotted #999"></div>
<div class="a" style="left:71px;top:275.38px;font-size:12.5px;line-height:12.5px;color:#1a1a1a;letter-spacing:-0.3px">Global Coordinate System</div>
<div class="a" style="left:35px;top:296px;width:9px;height:9px;background:#fff;border:1px solid #a0a8b8"></div>
<div class="a" style="left:37px;top:300px;width:5px;height:1px;background:#2a4a90;"></div>
<div class="a" style="left:39px;top:298px;width:1px;height:5px;background:#2a4a90;"></div>
<div class="a" style="left:44px;top:300px;width:6px;height:1px;border-top:1px dotted #999"></div>
<div class="a" style="left:71px;top:293.38px;font-size:12.5px;line-height:12.5px;color:#1a1a1a;letter-spacing:-0.3px">Center Grinder</div>
<div class="a" style="left:35px;top:314px;width:9px;height:9px;background:#fff;border:1px solid #a0a8b8"></div>
<div class="a" style="left:37px;top:318px;width:5px;height:1px;background:#2a4a90;"></div>
<div class="a" style="left:39px;top:316px;width:1px;height:5px;background:#2a4a90;"></div>
<div class="a" style="left:44px;top:318px;width:6px;height:1px;border-top:1px dotted #999"></div>
<div class="a" style="left:71px;top:311.38px;font-size:12.5px;line-height:12.5px;color:#1a1a1a;letter-spacing:-0.3px">Assembly1</div>
<div class="a" style="left:35px;top:332px;width:9px;height:9px;background:#fff;border:1px solid #a0a8b8"></div>
<div class="a" style="left:37px;top:336px;width:5px;height:1px;background:#2a4a90;"></div>
<div class="a" style="left:39px;top:334px;width:1px;height:5px;background:#2a4a90;"></div>
<div class="a" style="left:44px;top:336px;width:6px;height:1px;border-top:1px dotted #999"></div>
<div class="a" style="left:71px;top:329.38px;font-size:12.5px;line-height:12.5px;color:#1a1a1a;letter-spacing:-0.3px">Cameras</div>
<div class="a" style="left:35px;top:350px;width:9px;height:9px;background:#fff;border:1px solid #a0a8b8"></div>
<div class="a" style="left:37px;top:354px;width:5px;height:1px;background:#2a4a90;"></div>
<div class="a" style="left:39px;top:352px;width:1px;height:5px;background:#2a4a90;"></div>
<div class="a" style="left:44px;top:354px;width:6px;height:1px;border-top:1px dotted #999"></div>
<div class="a" style="left:71px;top:347.38px;font-size:12.5px;line-height:12.5px;color:#1a1a1a;letter-spacing:-0.3px">Lights</div>
<svg class="a" style="left:50px;top:273px;" width="16" height="16" viewBox="0 0 16 16"><path d="M6.5 2 V10 L1.5 15 M6.5 10 H14" stroke="#333" stroke-width="1.7" fill="none"/><path d="M3.5 4.5 L6.5 1 L9.5 4.5Z M12 7 L15.5 10 L12 13Z M0.5 11 V15.5 H5Z" fill="#333"/></svg>
<svg class="a" style="left:50px;top:291px;" width="17" height="16" viewBox="0 0 17 16"><path d="M1 3 L5 1 L16 6 V12 L12 15 L1 9Z" fill="#1a3ab0"/><path d="M2 4 L5 2.5 L8 4 V11 L2 8Z" fill="#f8d010"/><path d="M5 2.5 L12 5 L15 6.5 L9 9 L8 4Z" fill="#a0c858" opacity=".8"/><path d="M8 5 L15 7 V12 L12 14 L8 12Z" fill="#78b0f0"/><rect x="9" y="7" width="4" height="3" fill="#b8d8ff" stroke="#2a4ab0" stroke-width=".6"/><path d="M9 11 L12 13 L15 11" stroke="#f8d010" stroke-width="1.2" fill="none"/></svg>
<svg class="a" style="left:50px;top:309px;" width="17" height="17" viewBox="0 0 17 17"><path d="M1 4 L4 1 L7 2 L9 1 L12 3 L14 4 L16 7 V11 L15 14 L12 16 L1 8Z" fill="#fff" stroke="#222" stroke-width="1.1" stroke-linejoin="round"/><path d="M4 1 L4.5 5 M7 2 L9 5 L9 9 L12 12 L12 16 M12 7 L15 9 M10 5 L13 4" stroke="#222" stroke-width=".9" fill="none"/></svg>
<svg class="a" style="left:50px;top:327px;" width="17" height="16" viewBox="0 0 17 16"><circle cx="4.5" cy="3.5" r="3" fill="#fff" stroke="#111" stroke-width="1.4"/><circle cx="10.5" cy="3.5" r="3" fill="#fff" stroke="#111" stroke-width="1.4"/><circle cx="4.5" cy="3.5" r="1" fill="#111"/><circle cx="10.5" cy="3.5" r="1" fill="#111"/><rect x="0.8" y="6.8" width="13" height="8.5" fill="#111"/><rect x="2.5" y="8.5" width="9.5" height="5" fill="#9090a8"/><rect x="3.5" y="11" width="7" height="2" fill="#60607a"/><rect x="14" y="8" width="2.5" height="6" fill="#111"/></svg>
<svg class="a" style="left:50px;top:345px;" width="17" height="17" viewBox="0 0 17 17"><ellipse cx="10.5" cy="11" rx="5" ry="5.5" fill="#e0dcc0" transform="rotate(-40 10.5 11)"/><path d="M1.5 1.5 L7 7" stroke="#1a3a90" stroke-width="3.4" stroke-linecap="round"/><path d="M2 2 L6.5 6.5" stroke="#6aa0e8" stroke-width="1.2"/><path d="M7 7 L15.5 16" stroke="#e02020" stroke-width="1.1"/><path d="M6 8 L8.5 5.5" stroke="#1a3a90" stroke-width="1.5"/></svg>
<div class="a" style="left:27px;top:914px;width:217px;height:15px;background:#efefef;"></div>
<div class="a" style="left:45px;top:914px;width:61px;height:15px;background:#c8c8c8;"></div>
<svg class="a" style="left:33px;top:917px;" width="6" height="9" viewBox="0 0 6 9"><path d="M5 1 L1.5 4.5 L5 8" stroke="#555" stroke-width="1.6" fill="none"/></svg>
<svg class="a" style="left:232px;top:917px;" width="6" height="9" viewBox="0 0 6 9"><path d="M1 1 L4.5 4.5 L1 8" stroke="#555" stroke-width="1.6" fill="none"/></svg>
<div class="a" style="left:26px;top:932px;width:59px;height:22px;background:#fbfbfb;border:1px solid #b8b8b8;border-top:none"></div>
<svg class="a" style="left:31px;top:934px;" width="18" height="17" viewBox="0 0 18 17"><rect x="0" y="0" width="18" height="17" fill="#ede6d0"/><circle cx="9" cy="2.5" r="1.3" fill="none" stroke="#3a80d0" stroke-width=".9"/><circle cx="7" cy="7.5" r="1.3" fill="none" stroke="#3a80d0" stroke-width=".9"/><circle cx="11" cy="7.5" r="1.3" fill="none" stroke="#3a80d0" stroke-width=".9"/><circle cx="5" cy="13.5" r="1.3" fill="none" stroke="#3a80d0" stroke-width=".9"/><circle cx="9" cy="13.5" r="1.3" fill="none" stroke="#3a80d0" stroke-width=".9"/><circle cx="13" cy="13.5" r="1.3" fill="none" stroke="#3a80d0" stroke-width=".9"/><path d="M8.3 3.8 L7.5 6.2 M9.7 3.8 L10.5 6.2 M6.5 8.8 L5.5 12.2 M7.5 8.8 L8.5 12.2 M11.5 8.8 L12.5 12.2" stroke="#3a80d0" stroke-width=".8"/></svg>
<div class="a" style="left:48px;top:937.38px;font-size:12.5px;line-height:12.5px;color:#333;letter-spacing:-0.3px">Scene</div>
<svg class="a" style="left:90px;top:934px;" width="17" height="17" viewBox="0 0 17 17"><circle cx="6.5" cy="6.5" r="5.5" fill="#a8c8f8" stroke="#888" stroke-width="1.2"/><path d="M10.5 10.5 L15 15" stroke="#d0a020" stroke-width="3"/></svg>
<div class="a" style="left:108px;top:937.38px;font-size:12.5px;line-height:12.5px;color:#444;letter-spacing:-0.3px">Search</div>
<svg class="a" style="left:155px;top:934px;" width="13" height="16" viewBox="0 0 13 16"><rect x="0.5" y="0.5" width="12" height="15" fill="#fff" stroke="#222"/><rect x="2" y="2" width="5" height="5" fill="#2a4a90"/><path d="M9 2 V7 M3 11 H10" stroke="#333"/></svg>
<div class="a" style="left:172px;top:937.38px;font-size:12.5px;line-height:12.5px;color:#444;letter-spacing:-0.3px">Properties</div>
<div class="a" style="left:6px;top:367px;width:2px;height:2px;background:#aaa;"></div>
<div class="a" style="left:10px;top:367px;width:2px;height:2px;background:#aaa;"></div>
<div class="a" style="left:14px;top:367px;width:2px;height:2px;background:#aaa;"></div>
<div class="a" style="left:18px;top:367px;width:2px;height:2px;background:#aaa;"></div>
<div class="a" style="left:6px;top:507px;width:2px;height:2px;background:#aaa;"></div>
<div class="a" style="left:10px;top:507px;width:2px;height:2px;background:#aaa;"></div>
<div class="a" style="left:14px;top:507px;width:2px;height:2px;background:#aaa;"></div>
<div class="a" style="left:18px;top:507px;width:2px;height:2px;background:#aaa;"></div>
<div class="a" style="left:6px;top:750px;width:2px;height:2px;background:#aaa;"></div>
<div class="a" style="left:10px;top:750px;width:2px;height:2px;background:#aaa;"></div>
<div class="a" style="left:14px;top:750px;width:2px;height:2px;background:#aaa;"></div>
<div class="a" style="left:18px;top:750px;width:2px;height:2px;background:#aaa;"></div>
<div class="a" style="left:4px;top:422px;width:20px;height:1px;background:#d0d0d0;"></div>
<div class="a" style="left:4px;top:893px;width:20px;height:1px;background:#d0d0d0;"></div>
<svg class="a" style="left:9px;top:494px;" width="4" height="7" viewBox="0 0 4 7"><path d="M4 0 V7 L0 3.5Z" fill="#555"/></svg>
<svg class="a" style="left:9px;top:737px;" width="4" height="7" viewBox="0 0 4 7"><path d="M4 0 V7 L0 3.5Z" fill="#555"/></svg>
<svg class="a" style="left:9px;top:942px;" width="4" height="7" viewBox="0 0 4 7"><path d="M4 0 V7 L0 3.5Z" fill="#555"/></svg>
<svg class="a" style="left:5px;top:378px;" width="17" height="14" viewBox="0 0 17 14"><path d="M0 4.5 H5 M2.5 2 V7 M0 10.5 H5" stroke="#a8a8a8"/><rect x="5.5" y="0.5" width="10" height="10" fill="#bdbdbd" stroke="#888"/><rect x="8" y="3" width="5" height="5" fill="#aaa"/></svg>
<svg class="a" style="left:5px;top:399px;" width="17" height="16" viewBox="0 0 17 16"><circle cx="6.5" cy="10" r="5.8" fill="#c2c2c2" stroke="#9a9a9a" stroke-width=".8"/><rect x="5.5" y="1.5" width="11" height="9" fill="none" stroke="#7a7a7a" stroke-width="1"/><path d="M6 4 H16" stroke="#7a7a7a" stroke-width=".8"/></svg>
<svg class="a" style="left:5px;top:430px;" width="17" height="16" viewBox="0 0 17 16"><circle cx="6.5" cy="10" r="5.8" fill="#c2c2c2" stroke="#9a9a9a" stroke-width=".8"/><rect x="5.5" y="1.5" width="11" height="9" fill="#b8b8b8" stroke="#7a7a7a" stroke-width="1"/></svg>
<svg class="a" style="left:5px;top:452px;" width="17" height="16" viewBox="0 0 17 16"><circle cx="6.5" cy="10" r="5.8" fill="#c2c2c2" stroke="#9a9a9a" stroke-width=".8"/><rect x="5.5" y="1.5" width="11" height="9" fill="#cfcfcf" stroke="#7a7a7a" stroke-width="1"/></svg>
<svg class="a" style="left:5px;top:474px;" width="17" height="16" viewBox="0 0 17 16"><circle cx="6.5" cy="10" r="5.8" fill="#c2c2c2" stroke="#9a9a9a" stroke-width=".8"/><rect x="5.5" y="1.5" width="11" height="9" fill="#fafafa" stroke="#7a7a7a" stroke-width="1"/></svg>
<svg class="a" style="left:5px;top:518px;" width="17" height="17" viewBox="0 0 17 17"><path d="M1 5 L5 1 H15 L11 5Z" fill="#cfe0f4" stroke="#2a5a98" stroke-width=".8"/><path d="M11 5 L15 1 V11 L11 15Z" fill="#a8c4e8" stroke="#2a5a98" stroke-width=".8"/><rect x="1" y="5" width="10" height="10" fill="#2e64a8" stroke="#1a3a70" stroke-width=".8"/></svg>
<svg class="a" style="left:5px;top:540px;" width="17" height="17" viewBox="0 0 17 17"><path d="M1 5 L5 1 H15 L11 5Z" fill="#2e64a8" stroke="#1a3a70" stroke-width=".8"/><path d="M11 5 L15 1 V11 L11 15Z" fill="#cfe0f4" stroke="#2a5a98" stroke-width=".8"/><rect x="1" y="5" width="10" height="10" fill="#f4f8fc" stroke="#2a5a98" stroke-width=".8"/></svg>
<svg class="a" style="left:5px;top:562px;" width="17" height="17" viewBox="0 0 17 17"><path d="M1 5 L5 1 H15 L11 5Z" fill="#cfe0f4" stroke="#2a5a98" stroke-width=".8"/><path d="M11 5 L15 1 V11 L11 15Z" fill="#cfe0f4" stroke="#2a5a98" stroke-width=".8"/><rect x="1" y="5" width="10" height="10" fill="#e8f0fa" stroke="#2a5a98" stroke-width=".8"/><path d="M1 5 L5 1 V11 L1 15Z" fill="#2e64a8"/></svg>
<svg class="a" style="left:5px;top:584px;" width="17" height="17" viewBox="0 0 17 17"><path d="M1 5 L5 1 H15 L11 5Z" fill="#cfe0f4" stroke="#2a5a98" stroke-width=".8"/><path d="M11 5 L15 1 V11 L11 15Z" fill="#2e64a8" stroke="#1a3a70" stroke-width=".8"/><rect x="1" y="5" width="10" height="10" fill="#f4f8fc" stroke="#2a5a98" stroke-width=".8"/></svg>
<svg class="a" style="left:5px;top:606px;" width="17" height="17" viewBox="0 0 17 17"><path d="M1 5 L5 1 H15 L11 5Z" fill="#f4f8fc" stroke="#2a5a98" stroke-width=".8"/><path d="M11 5 L15 1 V11 L11 15Z" fill="#cfe0f4" stroke="#2a5a98" stroke-width=".8"/><rect x="1" y="5" width="10" height="10" fill="#f4f8fc" stroke="#2a5a98" stroke-width=".8"/><rect x="5" y="1" width="10" height="10" fill="#2e64a8" stroke="#1a3a70" stroke-width=".8"/></svg>
<svg class="a" style="left:5px;top:628px;" width="17" height="17" viewBox="0 0 17 17"><path d="M1 5 L5 1 H15 L11 5Z" fill="#cfe0f4" stroke="#2a5a98" stroke-width=".8"/><path d="M11 5 L15 1 V11 L11 15Z" fill="#cfe0f4" stroke="#2a5a98" stroke-width=".8"/><rect x="1" y="5" width="10" height="10" fill="#f4f8fc" stroke="#2a5a98" stroke-width=".8"/><path d="M1 15 L5 11 H15 L11 15Z" fill="#2e64a8"/></svg>
<svg class="a" style="left:5px;top:650px;" width="17" height="17" viewBox="0 0 17 17"><path d="M2.5 2.5 L8.5 1.5 L15.5 6 H8.5Z" fill="#3a74c0" stroke="#1a3a70" stroke-width=".9" stroke-linejoin="round"/><path d="M2.5 2.5 L8.5 6 V15.5 L2.5 11Z" fill="#2e64a8" stroke="#1a3a70" stroke-width=".9" stroke-linejoin="round"/><rect x="8.5" y="6" width="7" height="9.5" fill="#3a74c0" stroke="#1a3a70" stroke-width=".9"/></svg>
<svg class="a" style="left:5px;top:672px;" width="17" height="17" viewBox="0 0 17 17"><path d="M2.5 2.5 L8.5 1.5 L15.5 6 H8.5Z" fill="#3a74c0" stroke="#1a3a70" stroke-width=".9" stroke-linejoin="round"/><path d="M2.5 2.5 L8.5 6 V15.5 L2.5 11Z" fill="#fff" stroke="#1a3a70" stroke-width=".9" stroke-linejoin="round"/><rect x="8.5" y="6" width="7" height="9.5" fill="#3a74c0" stroke="#1a3a70" stroke-width=".9"/></svg>
<svg class="a" style="left:5px;top:694px;" width="17" height="17" viewBox="0 0 17 17"><path d="M2.5 2.5 L8.5 1.5 L15.5 6 H8.5Z" fill="#fff" stroke="#1a3a70" stroke-width=".9" stroke-linejoin="round"/><path d="M2.5 2.5 L8.5 6 V15.5 L2.5 11Z" fill="#2e64a8" stroke="#1a3a70" stroke-width=".9" stroke-linejoin="round"/><rect x="8.5" y="6" width="7" height="9.5" fill="#3a74c0" stroke="#1a3a70" stroke-width=".9"/></svg>
<svg class="a" style="left:5px;top:716px;" width="17" height="17" viewBox="0 0 17 17"><path d="M2.5 2.5 L8.5 1.5 L15.5 6 H8.5Z" fill="#fff" stroke="#1a3a70" stroke-width=".9" stroke-linejoin="round"/><path d="M2.5 2.5 L8.5 6 V15.5 L2.5 11Z" fill="#fff" stroke="#1a3a70" stroke-width=".9" stroke-linejoin="round"/><rect x="8.5" y="6" width="7" height="9.5" fill="#3a74c0" stroke="#1a3a70" stroke-width=".9"/></svg>
<svg class="a" style="left:5px;top:761px;" width="17" height="16" viewBox="0 0 17 16"><path d="M2.5 3 L14.5 14" stroke="#222" stroke-width="1.1"/><path d="M0.5 5 L5 1 M12 16 L16.5 12 M2 4 L4 2.5 M13 15 L15 13" stroke="#222" stroke-width="1.1"/></svg>
<svg class="a" style="left:5px;top:782px;" width="17" height="17" viewBox="0 0 17 17"><path d="M0.8 0.5 V10 M16.2 0.5 V10 M1 4.5 H16" stroke="#f00000" stroke-width="1.4"/><path d="M1 4.5 L4 2.5 V6.5Z M16 4.5 L13 2.5 V6.5Z" fill="#f00000"/><path d="M1 1 H16" stroke="#333" stroke-width=".8"/><ellipse cx="8.5" cy="11.5" rx="5" ry="3.6" fill="#fff" stroke="#666" stroke-width=".6"/><ellipse cx="8.5" cy="11.5" rx="3" ry="2" fill="#1a5ad8"/></svg>
<svg class="a" style="left:5px;top:804px;" width="17" height="17" viewBox="0 0 17 17"><path d="M0.5 1 H9 M0.5 16 H9 M4.8 1 V16" stroke="#f00000" stroke-width="1.4"/><path d="M4.8 1 L2.8 4 H6.8Z M4.8 16 L2.8 13 H6.8Z" fill="#f00000"/><path d="M1 1 V16" stroke="#333" stroke-width=".8"/><ellipse cx="11.5" cy="8.5" rx="5" ry="3.6" fill="#fff" stroke="#666" stroke-width=".6"/><ellipse cx="11.5" cy="8.5" rx="3" ry="2" fill="#1a5ad8"/></svg>
<svg class="a" style="left:5px;top:826px;" width="17" height="17" viewBox="0 0 17 17"><path d="M0.5 15.5 H16 M0.5 14 L11 1" stroke="#222" stroke-width="1.1" fill="none"/><path d="M9.5 5 Q14 8 13.5 14.5" stroke="#222" stroke-width=".9" fill="none"/><path d="M8.5 4 L11 4.5 L10 6.5Z M12 13 L13.5 15 L15 13Z" fill="#222"/></svg>
<svg class="a" style="left:5px;top:848px;" width="17" height="17" viewBox="0 0 17 17"><circle cx="8.5" cy="8.5" r="7" fill="none" stroke="#333" stroke-width="1.2"/><path d="M4 4 L8.5 8.5 M4 4 V7 M4 4 H7" stroke="#333"/></svg>
<svg class="a" style="left:5px;top:870px;" width="17" height="17" viewBox="0 0 17 17"><circle cx="8.5" cy="8.5" r="7.5" fill="none" stroke="#333" stroke-width="1.2"/><path d="M3 3 L14 14 M3 3 V6.5 M3 3 H6.5 M14 14 V10.5 M14 14 H10.5" stroke="#333"/></svg>
<svg class="a" style="left:5px;top:901px;" width="17" height="17" viewBox="0 0 17 17"><path d="M2 15 L4 9 Q5 7 7 7 H9" stroke="#1a3a80" stroke-width="1.5" fill="none"/><path d="M0 13 L3 16 L5 12" fill="#1a3a80"/><text x="9" y="9" font-family="Liberation Sans" font-weight="bold" font-size="9" fill="#1a3a80">A</text></svg>
<svg class="a" style="left:9px;top:923px;" width="9" height="17" viewBox="0 0 9 17"><rect x="0" y="0" width="9" height="17" fill="#333"/><path d="M0 2 H9 M0 4.3 H9 M0 6.6 H9" stroke="#eee" stroke-width=".9"/><rect x="2" y="8.5" width="3" height="8" fill="#777"/></svg>
<div class="a" style="left:251px;top:207px;width:1428px;height:747px;background:#e2e2e2;"></div>
<div class="a" style="left:251px;top:207px;width:1427px;height:1px;background:#6a6a6a;"></div>
<div class="a" style="left:251px;top:207px;width:1px;height:746px;background:#6a6a6a;"></div>
<svg class="a" style="left:252px;top:208px" width="1426" height="745" viewBox="252 208 1426 745"><defs><linearGradient id="bg" x1="0" y1="208" x2="0" y2="952" gradientUnits="userSpaceOnUse"><stop offset="0" stop-color="#5177a5"/><stop offset="1" stop-color="#fcfcfd"/></linearGradient><linearGradient id="cyl" x1="0" y1="432" x2="0" y2="702" gradientUnits="userSpaceOnUse"><stop offset="0" stop-color="#c25c5c"/><stop offset="0.04" stop-color="#ad5555"/><stop offset="0.18" stop-color="#9e4f4f"/><stop offset="0.39" stop-color="#9c4f4f"/><stop offset="0.47" stop-color="#a65a5a"/><stop offset="0.578" stop-color="#be7070"/><stop offset="0.62" stop-color="#b86868"/><stop offset="0.70" stop-color="#9e5050"/><stop offset="0.85" stop-color="#8e4646"/><stop offset="0.96" stop-color="#a05252"/><stop offset="1" stop-color="#a85050"/></linearGradient><linearGradient id="strip" x1="0" y1="319.5" x2="0" y2="336" gradientUnits="userSpaceOnUse"><stop offset="0" stop-color="#c46262"/><stop offset="1" stop-color="#b05858"/></linearGradient><linearGradient id="stripb" x1="0" y1="799" x2="0" y2="815" gradientUnits="userSpaceOnUse"><stop offset="0" stop-color="#a85252"/><stop offset="1" stop-color="#a65454"/></linearGradient><linearGradient id="side" x1="1031" y1="0" x2="1122" y2="0" gradientUnits="userSpaceOnUse"><stop offset="0" stop-color="#aa5a5a"/><stop offset="0.2" stop-color="#a05050"/><stop offset="0.6" stop-color="#984c4c"/><stop offset="0.9" stop-color="#884444"/><stop offset="1" stop-color="#9a5252"/></linearGradient><linearGradient id="fil" x1="761" y1="0" x2="806" y2="0" gradientUnits="userSpaceOnUse"><stop offset="0" stop-color="#8c4646"/><stop offset="0.3" stop-color="#944a4a"/><stop offset="1" stop-color="#a05454"/></linearGradient><radialGradient id="hl" cx="0" cy="0" r="1" gradientUnits="userSpaceOnUse" gradientTransform="translate(799 450) rotate(12) scale(7 18)"><stop offset="0" stop-color="#f4c4c4"/><stop offset="0.45" stop-color="#d48282"/><stop offset="1" stop-color="#b05a5a" stop-opacity="0"/></radialGradient><radialGradient id="hl2" cx="800" cy="690" r="12" gradientUnits="userSpaceOnUse"><stop offset="0" stop-color="#c07070"/><stop offset="1" stop-color="#a05050" stop-opacity="0"/></radialGradient></defs><rect x="252" y="208" width="1426" height="745" fill="url(#bg)"/><rect x="626" y="432" width="158" height="270" fill="url(#cyl)"/><path d="M783 432 H788 Q800 431 806 416 V718 Q800 703 788 702 H783Z" fill="#aa5656"/><path d="M783 432 H788 Q800 431 806 416 V718 Q800 703 788 702 H783Z" fill="url(#hl)"/><path d="M806 447 C802 456 792 466 783.5 471.5 C772 479 762 495 762 530 V605 C762 630 770 652 781 660 C790 666 800 674 806 688 Z" fill="url(#fil)"/><path d="M806 336 H1031 V411 H897 Q874 411 874 434 V700 Q874 723 897 723 H1031 V799 H806Z" fill="#ab6262"/><path d="M806 319.5 H986 C1010 325 1053 325 1077 319.5 H1121.5 Q1075.5 331.4 1031.5 336 H806Z" fill="url(#strip)"/><path d="M806 799 H1031.5 Q1075 799.5 1121.5 815.5 H1077 C1053 809.5 1010 809.5 986 815.5 H806Z" fill="url(#stripb)"/><path d="M1031 336 Q1075.5 331.4 1121.5 319.5 V386.5 Q1075.5 407.3 1031 411Z" fill="url(#side)"/><path d="M1031 723 Q1075 728 1121.5 747 V815.5 Q1075 799.5 1031 799Z" fill="url(#side)"/><g fill="none" stroke="#111" stroke-width="1.1"><path d="M626.5 432 V702"/><path d="M783.5 432 V472 M783.5 660 V702" stroke="#3a1a1a" stroke-width=".8"/><path d="M806 447 C802 456 792 466 783.5 471.5 C772 479 762 495 762 530 V605 C762 630 770 652 781 660 C790 666 800 674 806 688"/><path d="M806.5 319.5 V815.5"/><path d="M806 336.5 H1031"/><path d="M806 798.5 H1031"/><path d="M986 320 C1010 325 1053 325 1077 320"/><path d="M986 815 C1010 809.5 1053 809.5 1077 815"/><path d="M1031.5 336 V411 M1031.5 723 V799"/><path d="M1031 336 Q1075.5 331.4 1121.5 319.5"/><path d="M1121.5 386.5 Q1075.5 407.3 1031 411"/><path d="M1031 723 Q1075 728 1121.5 747"/><path d="M1121.5 815.5 Q1075 799.5 1031 799"/><path d="M1121.5 319.5 V386.5 M1121.5 747 V815.5"/><path d="M1031 411.5 H897 Q874.5 411.5 874.5 434 V700 Q874.5 722.5 897 722.5 H1031"/><path d="M896.5 405 V411 M896.5 723 V729" stroke-width=".8"/></g><path d="M289 884 L294.5 890.5 M294.5 884 L289 890.5" stroke="#ff2020" stroke-width="1.1" fill="none"/><path d="M290 905 V914" stroke="#f08080" stroke-width="2"/><path d="M287 905.5 L290 897 L293 905.5Z" fill="#a01010"/><path d="M293 916 H302" stroke="#60d060" stroke-width="2"/><path d="M301 913 L310 916 L301 919Z" fill="#30a030"/><circle cx="290" cy="916" r="2.5" fill="#fff" stroke="#888" stroke-width=".6"/><path d="M316.5 912.5 L319.5 916 L322.5 912.5 M319.5 916 V920" stroke="#20e020" stroke-width="1.1" fill="none"/><path d="M289 919.5 H294.5 L289 925.5 H294.5" stroke="#1010ff" stroke-width="1.3" fill="none"/></svg>
<div class="a" style="left:0px;top:955px;width:1680px;height:32px;background:#e4e4e4;"></div>
<div class="a" style="left:251px;top:953px;width:1428px;height:1px;background:#d0d0d0;"></div>
<div class="a" style="left:251px;top:954px;width:1428px;height:1px;background:#f4f4f4;"></div>
<svg class="a" style="left:8px;top:961px;" width="14" height="13" viewBox="0 0 14 13"><rect x="0.5" y="0.5" width="11" height="12" fill="#fff" stroke="#333"/><rect x="3" y="3" width="2" height="2" fill="#333"/><rect x="7" y="3" width="2" height="2" fill="#333"/><rect x="3" y="8" width="2" height="2" fill="#333"/><rect x="7" y="8" width="2" height="2" fill="#333"/><path d="M12 1 Q13.5 1 13.5 3 V5" stroke="#333" fill="none"/></svg>
<div class="a" style="left:26px;top:962.38px;font-size:12.5px;line-height:12.5px;color:#444;letter-spacing:-0.3px">Catalog Browser</div>
<div class="a" style="left:7px;top:980px;width:104px;height:6px;background:#d8d8d8;"></div>
<div class="a" style="left:0px;top:986px;width:1680px;height:1px;background:#c8c8c8;"></div>
<div class="a" style="left:0px;top:987px;width:1680px;height:23px;background:#f0f0f0;"></div>
<div class="a" style="left:3px;top:993.38px;font-size:12.5px;line-height:12.5px;color:#1a5fd0;letter-spacing:0.1px"><u>http://www.ironcad.com</u></div>
<div class="a" style="left:916px;top:992.38px;font-size:12.5px;line-height:12.5px;color:#444;letter-spacing:-0.6px">View size: 1427 x &nbsp;746</div>
<div class="a" style="left:1054px;top:992.38px;font-size:12.5px;line-height:12.5px;color:#444;letter-spacing:-0.2px">Units: in, deg</div>
<svg class="a" style="left:1145px;top:991px;" width="17" height="17" viewBox="0 0 17 17"><circle cx="7" cy="6.5" r="5.8" fill="#fff" stroke="#222" stroke-width="1.4"/><path d="M11 10.5 L15.5 15" stroke="#222" stroke-width="2.4" stroke-linecap="round"/><path d="M5 3.5 H8 L9.5 5 V9.5 H5Z" fill="#fff" stroke="#444" stroke-width=".8"/></svg>
<svg class="a" style="left:1169px;top:991px;" width="17" height="17" viewBox="0 0 17 17"><circle cx="7" cy="6.5" r="5.8" fill="#fff" stroke="#222" stroke-width="1.4"/><path d="M11 10.5 L15.5 15" stroke="#222" stroke-width="2.4" stroke-linecap="round"/><rect x="4.5" y="4" width="5" height="5" fill="#fff" stroke="#444" stroke-width=".8"/></svg>
<svg class="a" style="left:1203px;top:991px;" width="17" height="17" viewBox="0 0 17 17"><path d="M1 5 L4.5 1.5 H12 L8.5 5Z" fill="#fff080" stroke="#111" stroke-width=".9"/><rect x="1" y="5" width="7.5" height="8.5" fill="#f8e870" stroke="#111" stroke-width=".9"/><path d="M8.5 5 L12 1.5 V10 L8.5 13.5Z" fill="#3a70c0" stroke="#111" stroke-width=".9"/><path d="M13 3 V9 M10 6 H16 M11 4 L15 8 M15 4 L11 8" stroke="#e00000" stroke-width="1.1"/></svg>
<svg class="a" style="left:1239px;top:991px;" width="17" height="17" viewBox="0 0 17 17"><path d="M1 5 L5 1 H15 L11 5Z" fill="#d0e2f6" stroke="#3a5a90" stroke-width=".7"/><path d="M11 5 L15 1 V11 L11 15Z" fill="#b0ccec" stroke="#3a5a90" stroke-width=".7"/><rect x="1" y="5" width="10" height="10" fill="#3a6ab0" stroke="#1a3a70" stroke-width=".8"/></svg>
<svg class="a" style="left:1275px;top:991px;" width="17" height="17" viewBox="0 0 17 17"><path d="M0 8 L3 5.5 V10.5Z" fill="#333"/><path d="M4 9 Q4 4 10 4 Q14 4 14 7" stroke="#2a6ad0" stroke-width="1.4" fill="none"/><path d="M10 0.5 L8 3 H12Z" fill="#333"/><rect x="8" y="8.5" width="7.5" height="8" fill="#fff" stroke="#222" stroke-width="1"/><rect x="10" y="12" width="3.5" height="3" fill="#333"/></svg>
<svg class="a" style="left:1309px;top:991px;" width="17" height="17" viewBox="0 0 17 17"><path d="M1 9 L12 2 L16 4 L5 12Z" fill="#8ab0e0" stroke="#1a3a70" stroke-width=".7"/><path d="M1 9 L5 12 V16 L1 13Z" fill="#3a70c0" stroke="#1a3a70" stroke-width=".7"/><path d="M5 12 L16 4 V8 L5 16Z" fill="#4a80d0" stroke="#1a3a70" stroke-width=".7"/></svg>
<svg class="a" style="left:1333px;top:991px;" width="17" height="17" viewBox="0 0 17 17"><circle cx="4.5" cy="11.5" r="3.5" fill="#c8e0f4" stroke="#1a3a70" stroke-width="1.6"/><circle cx="11.5" cy="11.5" r="3.5" fill="#c8e0f4" stroke="#1a3a70" stroke-width="1.6"/><path d="M2 9 Q2 3 6 1.5 M8 10 Q9 8 10 8 M15 10 Q16 5 17 4" stroke="#1a3a70" stroke-width="1.4" fill="none"/></svg>
<svg class="a" style="left:1431px;top:991px;" width="17" height="17" viewBox="0 0 17 17"><path d="M0.5 9 V6 Q0.5 3 4 3 H7 V0.5 L11 4.5 L7 8.5 V6 H4.5 Q3.5 6 3.5 7 V9Z" fill="#b0b0b0"/><path d="M6 7 V16 L8 14 L10 17.5 L11.5 16.5 L9.5 13.5 H12.5Z" fill="#fff" stroke="#b0b0b0" stroke-width=".9"/></svg>
<svg class="a" style="left:1479px;top:991px;" width="17" height="17" viewBox="0 0 17 17"><rect x="0.5" y="2.5" width="11" height="7" fill="#fafafa" stroke="#bbb"/><path d="M6 6 V16 L8.5 13.5 L10.5 17 L12 16 L10 12.5 H13Z" fill="#fff" stroke="#111"/></svg>
<svg class="a" style="left:1658px;top:991px;" width="17" height="17" viewBox="0 0 17 17"><rect x="5.5" y="1.5" width="7" height="5" fill="#e01010" stroke="#1a3ab0"/><path d="M9 7 V9 M4 9 H14 M4 9 V11 M14 9 V11" stroke="#1a3ab0"/><rect x="0.5" y="11.5" width="7" height="4" fill="#a8c8e8" stroke="#1a3ab0"/><rect x="10.5" y="11.5" width="7" height="4" fill="#f8e878" stroke="#1a3ab0"/></svg>
<div class="a" style="left:1362px;top:989px;width:31px;height:21px;background:#cfcfcf;"></div>
<svg class="a" style="left:1368px;top:991px;" width="16" height="16" viewBox="0 0 16 16"><path d="M1 5 L5 1 H15 L11 5Z" fill="#b8d0f0" stroke="#3a5a90" stroke-width=".7"/><rect x="1" y="5" width="10" height="10" fill="#a0c0e8" stroke="#3a5a90" stroke-width=".8"/><path d="M11 5 L15 1 V11 L11 15Z" fill="#c0d8f4" stroke="#3a5a90" stroke-width=".7"/></svg>
<svg class="a" style="left:1398px;top:990px;" width="17" height="17" viewBox="0 0 17 17"><path d="M3 6 L7 2 H15 L11 6Z" fill="#5a8ad0" stroke="#102a60" stroke-width=".7"/><rect x="3" y="6" width="8" height="8" fill="#2a60c0" stroke="#102a60" stroke-width=".8"/><path d="M11 6 L15 2 V10 L11 14Z" fill="#3a70d0" stroke="#102a60" stroke-width=".7"/><rect x="0.5" y="9.5" width="9" height="6" fill="#4a80d0" stroke="#102a60" stroke-width=".7"/></svg>
<div class="a" style="left:1453px;top:989px;width:21px;height:21px;background:#d4d4d4;"></div>
<svg class="a" style="left:1457px;top:991px;" width="12" height="16" viewBox="0 0 12 16"><path d="M1 1 V13 L4 10 L6.5 14.5 L8.5 13.5 L6 9 H10Z" fill="#fff" stroke="#111" stroke-width="1"/></svg>
<svg class="a" style="left:1192px;top:997px;" width="6" height="4" viewBox="0 0 6 4"><path d="M0 0 H6 L3 3.5Z" fill="#555"/></svg>
<svg class="a" style="left:1227px;top:997px;" width="6" height="4" viewBox="0 0 6 4"><path d="M0 0 H6 L3 3.5Z" fill="#555"/></svg>
<svg class="a" style="left:1263px;top:997px;" width="6" height="4" viewBox="0 0 6 4"><path d="M0 0 H6 L3 3.5Z" fill="#555"/></svg>
<svg class="a" style="left:1298px;top:997px;" width="6" height="4" viewBox="0 0 6 4"><path d="M0 0 H6 L3 3.5Z" fill="#555"/></svg>
<svg class="a" style="left:1356px;top:997px;" width="6" height="4" viewBox="0 0 6 4"><path d="M0 0 H6 L3 3.5Z" fill="#555"/></svg>
<svg class="a" style="left:1386px;top:997px;" width="6" height="4" viewBox="0 0 6 4"><path d="M0 0 H6 L3 3.5Z" fill="#555"/></svg>
<svg class="a" style="left:1417px;top:997px;" width="6" height="4" viewBox="0 0 6 4"><path d="M0 0 H6 L3 3.5Z" fill="#555"/></svg>
<div class="a" style="left:1500px;top:989px;width:88px;height:20px;background:#fff;border:1px solid #d0d0d0"></div>
<div class="a" style="left:1503px;top:994.38px;font-size:12.5px;line-height:12.5px;color:#333;letter-spacing:-0.3px">Any</div>
<svg class="a" style="left:1577px;top:997px;" width="6" height="4" viewBox="0 0 6 4"><path d="M0 0 H6 L3 3.5Z" fill="#555"/></svg>
<div class="a" style="left:1590px;top:989px;width:65px;height:20px;background:#fff;border:1px solid #d0d0d0"></div>
<div class="a" style="left:1593px;top:994.38px;font-size:12.5px;line-height:12.5px;color:#333;letter-spacing:-0.3px">Yoke</div>
<svg class="a" style="left:1643px;top:997px;" width="6" height="4" viewBox="0 0 6 4"><path d="M0 0 H6 L3 3.5Z" fill="#555"/></svg>
<div class="a" style="left:0px;top:1009px;width:1680px;height:1px;background:#fafafa;"></div>
<div class="a" style="left:0px;top:1010px;width:1680px;height:4px;background:#2b2b2b;"></div>
<div class="a" style="left:48px;top:1010px;width:344px;height:4px;background:#e8e8e8;"></div>
<div class="a" style="left:48px;top:1010px;width:344px;height:1px;background:#b0b0b0;"></div>
</body></html>
